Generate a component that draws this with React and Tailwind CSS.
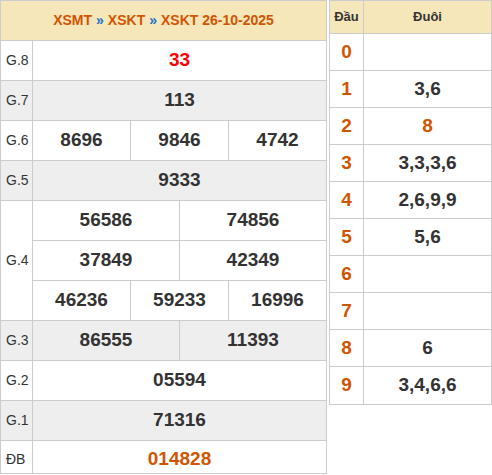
const rows = [
  { label: 'G.8', lines: [['33']], tone: 'red', alt: false },
  { label: 'G.7', lines: [['113']], alt: true },
  { label: 'G.6', lines: [['8696', '9846', '4742']], alt: false },
  { label: 'G.5', lines: [['9333']], alt: true },
  {
    label: 'G.4',
    lines: [
      ['56586', '74856'],
      ['37849', '42349'],
      ['46236', '59233', '16996'],
    ],
    alt: false,
  },
  { label: 'G.3', lines: [['86555', '11393']], alt: true },
  { label: 'G.2', lines: [['05594']], alt: false },
  { label: 'G.1', lines: [['71316']], alt: true },
  { label: 'ĐB', lines: [['014828']], tone: 'orange', alt: false, last: true },
];

const loto = [
  ['0', ''],
  ['1', '3,6'],
  ['2', '8', true],
  ['3', '3,3,3,6'],
  ['4', '2,6,9,9'],
  ['5', '5,6'],
  ['6', ''],
  ['7', ''],
  ['8', '6'],
  ['9', '3,4,6,6'],
];

function PrizeRow({ row }) {
  const bg = row.alt ? 'bg-[#eeeeee]' : 'bg-white';
  const numColor =
    row.tone === 'red' ? 'text-[#ff0000]' : row.tone === 'orange' ? 'text-[#d35400]' : 'text-[#333333]';
  const h = row.last ? 'h-[32px] pt-[5px]' : 'h-[39px]';

  return (
    <div className={`flex ${bg} ${row.last ? '' : 'border-b border-[#cccccc]'}`}>
      <div
        className={`w-[32px] border-r border-[#cccccc] flex items-center pl-[5px] text-[14px] text-[#333333] ${
          row.last ? 'pt-[5px]' : ''
        }`}
      >
        {row.label}
      </div>
      <div className="flex-1 flex flex-col">
        {row.lines.map((line, i) => (
          <div
            key={i}
            className={`flex ${i < row.lines.length - 1 ? 'border-b border-[#cccccc]' : ''}`}
          >
            {line.map((n, j) => (
              <div
                key={j}
                className={`flex-1 ${h} flex items-center justify-center font-bold text-[19px] ${numColor} ${
                  j > 0 ? 'border-l border-[#cccccc]' : ''
                }`}
              >
                {n}
              </div>
            ))}
          </div>
        ))}
      </div>
    </div>
  );
}

export default function App() {
  return (
    <div className="flex items-start gap-[2px] bg-white" style={{ fontFamily: '"Liberation Sans", Arial, sans-serif' }}>
      {/* Left - prize table */}
      <div className="w-[327px] border border-[#cccccc]">
        <div className="h-[40px] bg-[#f6e7bb] border-b border-[#cccccc] flex items-center justify-center font-bold text-[14px] text-[#d35400]">
          <span>XSMT</span>
          <span className="text-[#1a73c8] mx-[4px]">»</span>
          <span>XSKT</span>
          <span className="text-[#1a73c8] mx-[4px]">»</span>
          <span>XSKT 26-10-2025</span>
        </div>
        {rows.map((row) => (
          <PrizeRow key={row.label} row={row} />
        ))}
      </div>

      {/* Right - loto table */}
      <div className="w-[163px] border border-[#cccccc]">
        <div className="flex h-[33px] bg-[#f6e7bb] border-b border-[#cccccc] font-bold text-[13px] text-[#333333]">
          <div className="w-[34px] border-r border-[#cccccc] flex items-center justify-center">Đầu</div>
          <div className="flex-1 flex items-center justify-center">Đuôi</div>
        </div>
        {loto.map(([head, tail, hot], i) => (
          <div key={head} className={`flex h-[37px] ${i < loto.length - 1 ? 'border-b border-[#cccccc]' : ''}`}>
            <div className="w-[34px] border-r border-[#cccccc] flex items-center justify-center font-bold text-[19px] text-[#d35400]">
              {head}
            </div>
            <div
              className={`flex-1 flex items-center justify-center font-bold text-[19px] ${
                hot ? 'text-[#d35400]' : 'text-[#333333]'
              }`}
            >
              {tail}
            </div>
          </div>
        ))}
      </div>
    </div>
  );
}
